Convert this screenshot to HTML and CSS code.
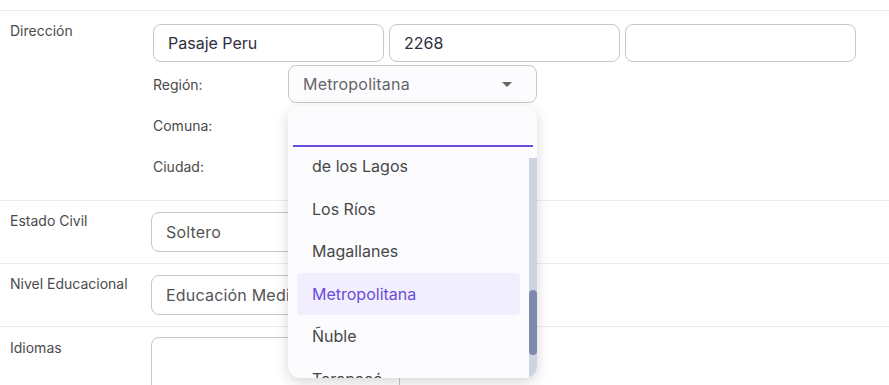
FILE: index.html
```html
<!DOCTYPE html>
<html lang="es">
<head>
    <meta charset="UTF-8">
    <meta name="viewport" content="width=device-width, initial-scale=1.0">
    <title>Ficha personal</title>
    <link rel="stylesheet" href="styles.css">
</head>
<body>

    <div class="form">
        <!-- Direccion -->
        <div class="row first">
            <div class="label">Dirección</div>
            <div class="field address">
                <div class="addressInputs">
                    <input type="text" class="input" value="Pasaje Peru" />
                    <input type="text" class="input" value="2268" />
                    <input type="text" class="input" value="" />
                </div>

                <div class="subRow first">
                    <div class="subLabel">Región:</div>
                    <div class="selectWrap">
                        <div class="select open">
                            <span>Metropolitana</span>
                            <span class="arrow"></span>
                        </div>

                        <!-- Region dropdown -->
                        <div class="dropdown">
                            <div class="search"><input type="text" /></div>
                            <div class="options">
                                <div class="option">de los Lagos</div>
                                <div class="option">Los Ríos</div>
                                <div class="option">Magallanes</div>
                                <div class="option selected">Metropolitana</div>
                                <div class="option">Ñuble</div>
                                <div class="option">Tarapacá</div>
                            </div>
                            <div class="scrollTrack"><div class="scrollThumb"></div></div>
                        </div>
                    </div>
                </div>
                <div class="subRow">
                    <div class="subLabel">Comuna:</div>
                </div>
                <div class="subRow">
                    <div class="subLabel">Ciudad:</div>
                </div>
            </div>
        </div>

        <div class="row">
            <div class="label">Estado Civil</div>
            <div class="field">
                <div class="select plain">Soltero</div>
            </div>
        </div>

        <div class="row">
            <div class="label">Nivel Educacional</div>
            <div class="field">
                <div class="select plain">Educación Media</div>
            </div>
        </div>

        <div class="row last">
            <div class="label">Idiomas</div>
            <div class="field">
                <div class="textarea"></div>
            </div>
        </div>
    </div>

</body>
</html>
```

FILE: styles.css
```css
body {
    margin: 0;
    padding-top: 10px;
    background-color: #fff;
    font-family: Inter, "Noto Sans", sans-serif;
    color: #444;
    height: 375px;
    overflow: hidden;
}

.form {
    border-top: 1px solid #ececec;
}

.row {
    display: grid;
    grid-template-columns: 151px 1fr;
    padding: 11px 0;
    border-bottom: 1px solid #ececec;
}

.row.first {
    padding-bottom: 13px;
}

.row.last {
    padding-top: 10px;
    border-bottom: none;
}

.label {
    padding-left: 10px;
    font-size: 14px;
    line-height: 18px;
    color: #4a4a4a;
}

.row.last .label {
    padding-top: 2px;
}

.field.address {
    padding-left: 2px;
    margin-top: 2px;
}

.addressInputs {
    display: flex;
    gap: 5px;
}

.input {
    box-sizing: border-box;
    width: 231px;
    height: 38px;
    padding: 0 14px;
    border: 1px solid #c6c6c6;
    border-radius: 8px;
    font-family: inherit;
    font-size: 16px;
    color: #2e2e3c;
    outline: none;
}

.subRow {
    display: flex;
    align-items: center;
    height: 41px;
}

.subRow.first {
    height: 38px;
    margin: 3px 0 2px;
}

.subLabel {
    width: 135px;
    font-size: 14px;
    color: #4a4a4a;
}

.selectWrap {
    position: relative;
}

.select {
    box-sizing: border-box;
    display: flex;
    align-items: center;
    justify-content: space-between;
    width: 249px;
    height: 38px;
    padding: 0 24px 0 14px;
    border: 1px solid #c6c6c6;
    border-radius: 8px;
    font-size: 16px;
    letter-spacing: 0.2px;
    color: #666;
    background-color: #fcfcff;
}

.select.plain {
    height: 40px;
    background-color: #fff;
    color: #555;
}

.arrow {
    width: 0;
    height: 0;
    border-left: 5px solid transparent;
    border-right: 5px solid transparent;
    border-top: 5px solid #666;
}

.textarea {
    box-sizing: border-box;
    width: 249px;
    height: 70px;
    border: 1px solid #c6c6c6;
    border-radius: 8px;
}

/* dropdown over the rows */
.dropdown {
    position: absolute;
    top: 41px;
    left: 0;
    width: 249px;
    height: 272px;
    background-color: #fcfcff;
    border-radius: 12px;
    box-shadow: 0 4px 14px rgba(0, 0, 0, 0.16);
    overflow: hidden;
    z-index: 10;
}

.search {
    padding: 0 4px 0 5px;
    height: 41px;
}

.search input {
    box-sizing: border-box;
    width: 100%;
    height: 41px;
    border: none;
    border-bottom: 2px solid #6a4bdb;
    background: transparent;
    outline: none;
}

.options {
    margin-top: -2px;
    padding: 0 17px 0 9px;
}

.option {
    height: 42.5px;
    line-height: 42.5px;
    padding-left: 15px;
    font-size: 16px;
    color: #474747;
    border-radius: 4px;
}

.option.selected {
    background-color: #f1effe;
    color: #6a4bdb;
}

.scrollTrack {
    position: absolute;
    top: 52px;
    right: 0;
    bottom: 0;
    width: 8px;
    background-color: #cdd3e1;
}

.scrollThumb {
    position: absolute;
    top: 132px;
    left: 0;
    width: 8px;
    height: 65px;
    border-radius: 4px;
    background-color: #7d8aad;
}
```
